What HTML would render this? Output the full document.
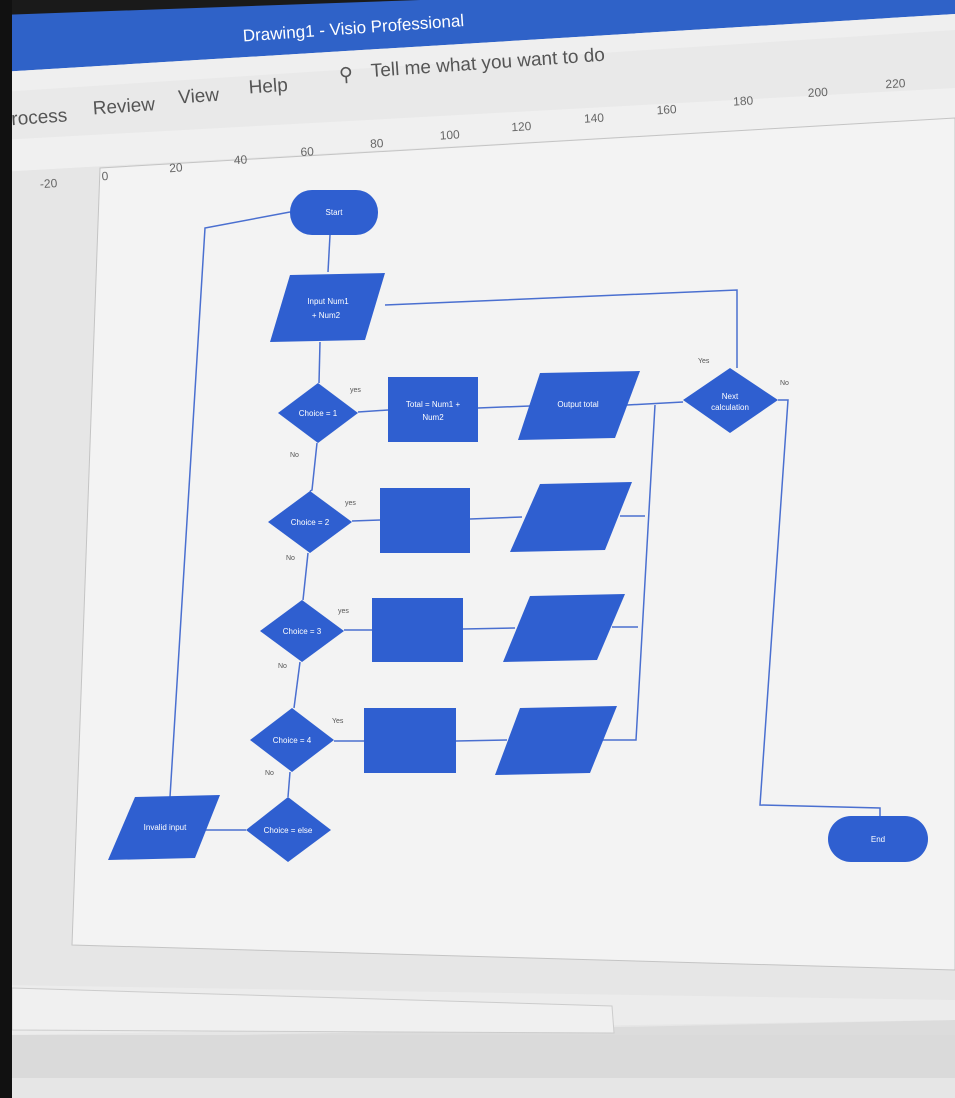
<!DOCTYPE html><html><head><style>body{margin:0;width:955px;height:1098px;overflow:hidden;background:#d9d9d9}svg{display:block}text{font-family:"Liberation Sans",sans-serif}</style></head><body>
<svg width="955" height="1098" viewBox="0 0 955 1098">
<rect width="955" height="1098" fill="#dcdcdc"/>
<polygon points="0,0 955,0 955,130 0,200" fill="#e9e9e9"/>
<polygon points="0,0 955,0 955,14 0,72" fill="#2f62c8"/>
<polygon points="0,0 420,0 0,15" fill="#1a1a1a"/>
<polygon points="0,72 955,14 955,30 0,92" fill="#efefef"/>
<polygon points="0,140 955,88 955,118 0,172" fill="#f0f0f0"/>
<polygon points="0,172 955,118 955,1020 0,1040" fill="#e6e6e6"/>
<polygon points="100,168 955,118 955,970 72,945" fill="#f3f3f3" stroke="#c4c4c4"/>
<polygon points="0,985 955,1000 955,1020 0,1035" fill="#ececec"/>
<polygon points="12,988 612,1006 614,1033 12,1030" fill="#f0f0f0" stroke="#ccc"/>
<rect x="0" y="1035" width="955" height="63" fill="#dadada"/>
<rect x="0" y="1078" width="955" height="20" fill="#e6e6e6"/>
<rect x="0" y="0" width="12" height="1098" fill="#111"/>
<g fill="#fff" font-size="17" transform="rotate(-4 350 20)"><text x="242" y="34">Drawing1  -  Visio Professional</text></g>
<g fill="#555" font-size="19" transform="rotate(-4 300 90)"><text x="10" y="105">rocess</text><text x="92" y="100">Review</text><text x="178" y="95">View</text><text x="249" y="90">Help</text><text x="340" y="84">⚲</text><text x="372" y="82">Tell me what you want to do</text></g>
<g fill="#666" font-size="12" transform="rotate(-3.5 450 140)"><text x="38" y="163">-20</text><text x="100" y="159">0</text><text x="168" y="155">20</text><text x="233" y="151">40</text><text x="300" y="147">60</text><text x="370" y="143">80</text><text x="440" y="139">100</text><text x="512" y="135">120</text><text x="585" y="131">140</text><text x="658" y="127">160</text><text x="735" y="123">180</text><text x="810" y="119">200</text><text x="888" y="115">220</text></g>
<g stroke="#4a6fd0" stroke-width="1.5" fill="none">
<polyline points="170,797 205,228 290,212"/><line x1="330" y1="235" x2="328" y2="272"/><line x1="320" y1="342" x2="319" y2="383"/>
<polyline points="317,443 312,490 310,491"/><polyline points="308,553 303,600"/><polyline points="300,662 294,708"/><polyline points="290,772 288,797"/>
<line x1="246" y1="830" x2="200" y2="830"/>
<line x1="358" y1="412" x2="388" y2="410"/><line x1="478" y1="408" x2="530" y2="406"/><line x1="627" y1="405" x2="683" y2="402"/>
<line x1="352" y1="521" x2="380" y2="520"/><line x1="470" y1="519" x2="522" y2="517"/><line x1="620" y1="516" x2="645" y2="516"/>
<line x1="344" y1="630" x2="372" y2="630"/><line x1="463" y1="629" x2="515" y2="628"/><line x1="612" y1="627" x2="638" y2="627"/>
<line x1="334" y1="741" x2="364" y2="741"/><line x1="456" y1="741" x2="507" y2="740"/>
<polyline points="655,405 636,740 603,740"/>
<polyline points="737,368 737,290 385,305"/><polyline points="778,400 788,400 760,805 880,808 880,816"/>
</g>
<g fill="#2f5fd0">
<rect x="290" y="190" width="88" height="45" rx="22"/>
<polygon points="290,275 385,273 365,340 270,342"/>
<polygon points="318,383 358,413 318,443 278,413"/>
<rect x="388" y="377" width="90" height="65"/>
<polygon points="540,373 640,371 615,438 518,440"/>
<polygon points="730,368 778,400 730,433 683,400"/>
<polygon points="310,491 352,522 310,553 268,522"/>
<rect x="380" y="488" width="90" height="65"/>
<polygon points="540,484 632,482 605,550 510,552"/>
<polygon points="302,600 344,631 302,662 260,631"/>
<rect x="372" y="598" width="91" height="64"/>
<polygon points="530,596 625,594 597,660 503,662"/>
<polygon points="292,708 334,740 292,772 250,740"/>
<rect x="364" y="708" width="92" height="65"/>
<polygon points="520,708 617,706 590,773 495,775"/>
<polygon points="288,797 331,830 288,862 246,830"/>
<polygon points="135,797 220,795 195,858 108,860"/>
<rect x="828" y="816" width="100" height="46" rx="23"/>
</g>
<g fill="#fff" font-size="8" text-anchor="middle">
<text x="334" y="215">Start</text><text x="328" y="304">Input Num1</text><text x="326" y="318">+ Num2</text>
<text x="318" y="416">Choice = 1</text><text x="433" y="407">Total = Num1 +</text><text x="433" y="420">Num2</text>
<text x="578" y="407">Output total</text><text x="730" y="399">Next</text><text x="730" y="410">calculation</text>
<text x="310" y="525">Choice = 2</text><text x="302" y="634">Choice = 3</text><text x="292" y="743">Choice = 4</text>
<text x="288" y="833">Choice = else</text><text x="165" y="830">Invalid input</text><text x="878" y="842">End</text>
</g>
<g fill="#555" font-size="7"><text x="350" y="392">yes</text><text x="290" y="457">No</text><text x="345" y="505">yes</text><text x="286" y="560">No</text><text x="338" y="613">yes</text><text x="278" y="668">No</text><text x="332" y="723">Yes</text><text x="265" y="775">No</text><text x="698" y="363">Yes</text><text x="780" y="385">No</text></g>
</svg></body></html>
